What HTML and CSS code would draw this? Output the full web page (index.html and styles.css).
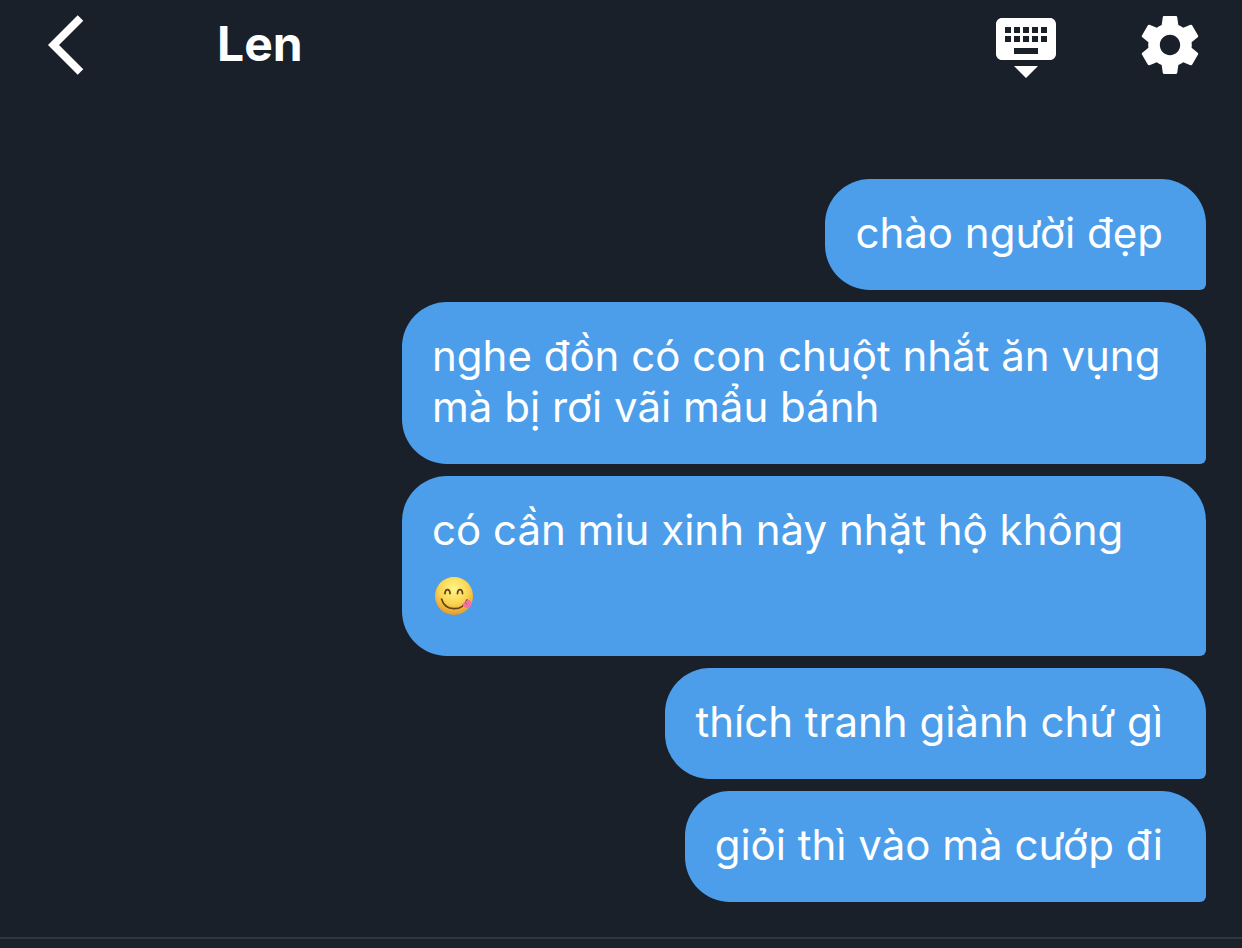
FILE: index.html
```html
<!DOCTYPE html>
<html lang="vi">
<head>
<meta charset="utf-8">
<meta name="viewport" content="width=device-width, initial-scale=1">
<title>Len</title>
<link rel="stylesheet" href="styles.css">
</head>
<body>
<header class="topbar">
  <button class="icon-button" type="button" aria-label="Back">
    <svg class="icon" viewBox="0 0 72 72" aria-hidden="true"><path d="M50.500 9 23.500 36l27 27" fill="none" stroke="currentColor" stroke-width="7.800"/></svg>
  </button>
  <h1 class="title">Len</h1>
  <div class="actions">
    <button class="icon-button" type="button" aria-label="Hide keyboard">
      <svg class="icon" viewBox="0 0 24 24" fill="currentColor" aria-hidden="true"><path d="M20 3H4c-1.100 0-2 .9-2 2v10c0 1.100.9 2 2 2h16c1.100 0 2-.9 2-2V5c0-1.100-.9-2-2-2zM11 6h2v2h-2zm0 3h2v2h-2zM8 6h2v2H8zm0 3h2v2H8zM7 11H5V9h2zm0-3H5V6h2zM16 15H8v-2h8zm0-4h-2V9h2zm0-3h-2V6h2zm3 3h-2V9h2zm0-3h-2V6h2zM12 23l4-4H8z"/></svg>
    </button>
    <button class="icon-button" type="button" aria-label="Settings">
      <svg class="icon" viewBox="-0.4 -0.4 24.8 24.8" fill="currentColor" aria-hidden="true"><path d="M19.430 12.980c.04-.32.070-.64.070-.98s-.03-.66-.070-.98l2.110-1.650c.19-.15.24-.42.120-.64l-2-3.460c-.12-.22-.39-.3-.61-.22l-2.490 1c-.52-.4-1.080-.73-1.690-.98l-.38-2.650C14.460 2.180 14.250 2 14 2h-4c-.25 0-.46.18-.49.42l-.38 2.650c-.61.25-1.170.59-1.690.98l-2.490-1c-.23-.09-.49 0-.61.22l-2 3.460c-.13.22-.070.49.120.64l2.110 1.650c-.04.32-.070.65-.070.98s.03.66.070.98l-2.110 1.650c-.19.15-.24.42-.12.64l2 3.460c.12.22.39.3.61.22l2.490-1c.52.4 1.080.73 1.690.98l.38 2.650c.03.24.24.42.49.42h4c.25 0 .46-.18.49-.42l.38-2.650c.61-.25 1.170-.59 1.690-.98l2.490 1c.23.09.49 0 .61-.22l2-3.460c.12-.22.070-.49-.12-.64l-2.110-1.650zM12 15.500c-1.930 0-3.500-1.570-3.500-3.500s1.570-3.500 3.500-3.500 3.500 1.570 3.500 3.500-1.570 3.500-3.500 3.500z"/></svg>
    </button>
  </div>
</header>
<main class="messages">
  <p class="bubble">chào người đẹp</p>
  <p class="bubble">nghe đồn có con chuột nhắt ăn vụng mà bị rơi vãi mẩu bánh</p>
  <p class="bubble bubble-wide">có cần miu xinh này nhặt hộ không
    <span class="emoji-line"><svg class="emoji" viewBox="0 0 40 40" role="img" aria-label="😋">
      <defs>
        <radialGradient id="face" cx="50%" cy="32%" r="68%"><stop offset="0" stop-color="#fff58a"/><stop offset=".55" stop-color="#fbd652"/><stop offset="1" stop-color="#e59a2c"/></radialGradient>
      </defs>
      <circle cx="20" cy="20" r="19" fill="url(#face)"/>
      <path d="M11 17.500c.3-5.300 4.700-5.300 5 0M23.500 17.500c.3-5.300 4.700-5.300 5 0" fill="none" stroke="#664317" stroke-width="1.800" stroke-linecap="round"/>
      <path d="M7.500 23c3.800 12.500 20.500 13 25.500 1" fill="none" stroke="#664317" stroke-width="1.700" stroke-linecap="round"/>
      <path d="M28.300 28.200 34 23.500c5 1.500 4.600 8.400-.8 8.500-2.600 0-4.200-1.500-4.900-3.800z" fill="#f2719f"/>
      <path d="m31 26.500 2.700 2" fill="none" stroke="#d24c80" stroke-width="1"/>
    </svg></span>
  </p>
  <p class="bubble">thích tranh giành chứ gì</p>
  <p class="bubble">giỏi thì vào mà cướp đi</p>
</main>
<footer class="composer-edge"></footer>
</body>
</html>
```
FILE: styles.css
```css
* { box-sizing: border-box; }

body {
  margin: 0;
  min-height: 100vh;
  display: flex;
  flex-direction: column;
  background: #19202a;
  color: #fff;
  font-family: Inter, "Noto Sans", sans-serif;
}

.topbar {
  display: flex;
  align-items: center;
  padding: 9px 36px 9px 30px;
}

.title {
  margin: 0 0 0 115px;
  padding-bottom: 2px;
  font-size: 48px;
  line-height: 56px;
  font-weight: 700;
}

.actions {
  display: flex;
  gap: 72px;
  margin-left: auto;
}

.icon-button {
  width: 72px;
  height: 72px;
  padding: 0;
  border: 0;
  background: none;
  color: inherit;
}

.icon { display: block; width: 100%; height: 100%; }

.messages {
  flex: 1;
  display: flex;
  flex-direction: column;
  align-items: flex-end;
  gap: 12px;
  padding: 89px 36px 35px;
}

.bubble {
  max-width: 804px;
  margin: 0;
  padding: 28px 43px 32px 30px;
  border-radius: 45px 45px 6px 45px;
  background: #4c9eeb;
  font-size: 42px;
  line-height: 51px;
}

.bubble-wide { width: 100%; }

.emoji-line {
  display: flex;
  align-items: center;
  height: 69px;
  padding: 12px 2px 0;
}

.emoji { width: 40px; height: 40px; }

.composer-edge {
  height: 11px;
  border-top: 2px solid #303743;
  background: #19212b;
}
```
